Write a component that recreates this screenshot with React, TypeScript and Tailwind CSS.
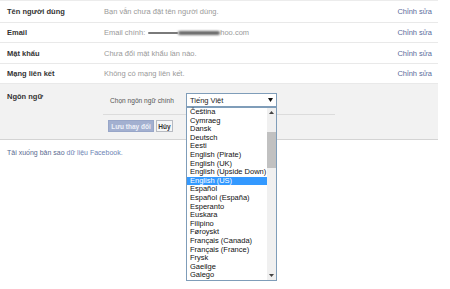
import React from 'react';

const rows = [
  { label: 'Tên người dùng', value: 'Bạn vẫn chưa đặt tên người dùng.', h: 'h-[22px]' },
  { label: 'Email', value: 'email', h: 'h-[20px]' },
  { label: 'Mật khẩu', value: 'Chưa đổi mật khẩu lần nào.', h: 'h-[21px]' },
  { label: 'Mạng liên kết', value: 'Không có mạng liên kết.', h: 'h-[20px]' },
];

const languages = [
  'Čeština',
  'Cymraeg',
  'Dansk',
  'Deutsch',
  'Eesti',
  'English (Pirate)',
  'English (UK)',
  'English (Upside Down)',
  'English (US)',
  'Español',
  'Español (España)',
  'Esperanto',
  'Euskara',
  'Filipino',
  'Føroyskt',
  'Français (Canada)',
  'Français (France)',
  'Frysk',
  'Gaeilge',
  'Galego',
];

function EmailValue() {
  return (
    <span className="flex items-center">
      <span>Email chính:</span>
      <span className="ml-[3px] flex items-center">
        <span className="h-[2px] w-[30px] rounded-full bg-[#7a7a7a] blur-[0.6px]" />
        <span className="h-[4px] w-[42px] rounded-full bg-[#666] blur-[0.8px]" />
      </span>
      <span>hoo.com</span>
    </span>
  );
}

export default function App() {
  return (
    <div
      className="relative h-[289px] w-[450px] overflow-hidden bg-white text-[7.5px] leading-[9px]"
      style={{ fontFamily: '"Liberation Sans", Arial, sans-serif' }}
    >
      <div className="w-[438px] border-t border-[#ececec]">
        {rows.map((r) => (
          <div
            key={r.label}
            className={`flex items-center border-b border-[#e9e9e9] ${r.h}`}
          >
            <div className="w-[104px] pl-[7px] font-bold text-[#333]">{r.label}</div>
            <div className="flex-1 text-[#999]">
              {r.value === 'email' ? <EmailValue /> : r.value}
            </div>
            <div className="pr-[6px] text-[#5b6c9c]">Chỉnh sửa</div>
          </div>
        ))}

        {/* Ngôn ngữ */}
        <div className="flex h-[56px] border-b border-[#d4d4d4] bg-[#f2f2f2]">
          <div className="w-[103px] pl-[7px] pt-[8px] font-bold text-[#333]">Ngôn ngữ</div>
          <div className="w-[232px]">
            <div className="flex items-center pt-[9px]">
              <span className="ml-[7px] w-[76px] whitespace-nowrap text-[6.6px] text-[#555]">
                Chọn ngôn ngữ chính
              </span>
              <div className="flex h-[14px] w-[91px] items-center justify-between border border-[#7f9db9] bg-white pl-[3px] pr-[3px] text-[#222]">
                <span>Tiếng Việt</span>
                <svg width="5" height="4" viewBox="0 0 5 4">
                  <path d="M0 0h5L2.5 4z" fill="#111" />
                </svg>
              </div>
            </div>
            <div className="mt-[7px] border-t border-[#dcdcdc]" />
            <div className="ml-[5px] mt-[5px] flex gap-[2px] text-[6.5px]">
              <div className="flex h-[12px] w-[46px] items-center justify-center border border-[#98a6c8] bg-[#a3b0d0] font-bold text-[#eef1f8]">
                Lưu thay đổi
              </div>
              <div className="flex h-[12px] w-[17px] items-center justify-center border border-[#b8bbc2] bg-[#f5f6f7] font-bold text-[#333]">
                Hủy
              </div>
            </div>
          </div>
        </div>

        <div className="pl-[7px] pt-[8px] text-[7px]">
          <span className="text-[#5a6a90]">Tải xuống bản sao</span>{' '}
          <span className="text-[#6d84b4]">dữ liệu Facebook.</span>
        </div>
      </div>

      {/* open dropdown list */}
      <div className="absolute left-[186px] top-[107px] flex h-[174px] w-[91px] border border-[#7f9db9] bg-white">
        <div className="flex-1">
          {languages.map((l) => (
            <div
              key={l}
              className={`h-[8.6px] pl-[3px] leading-[8.6px] ${
                l === 'English (US)' ? 'bg-[#3399ff] text-white' : 'text-[#111]'
              }`}
            >
              {l}
            </div>
          ))}
        </div>
        <div className="relative w-[9px] bg-[#f0f0f0]">
          <svg className="absolute left-[2px] top-[3px]" width="5" height="3" viewBox="0 0 5 3">
            <path d="M2.5 0L5 3H0z" fill="#444" />
          </svg>
          <div className="absolute left-[0px] top-[24px] h-[36px] w-[9px] bg-[#c1c1c1]" />
          <svg className="absolute bottom-[3px] left-[2px]" width="5" height="3" viewBox="0 0 5 3">
            <path d="M0 0h5L2.5 3z" fill="#444" />
          </svg>
        </div>
      </div>
    </div>
  );
}
